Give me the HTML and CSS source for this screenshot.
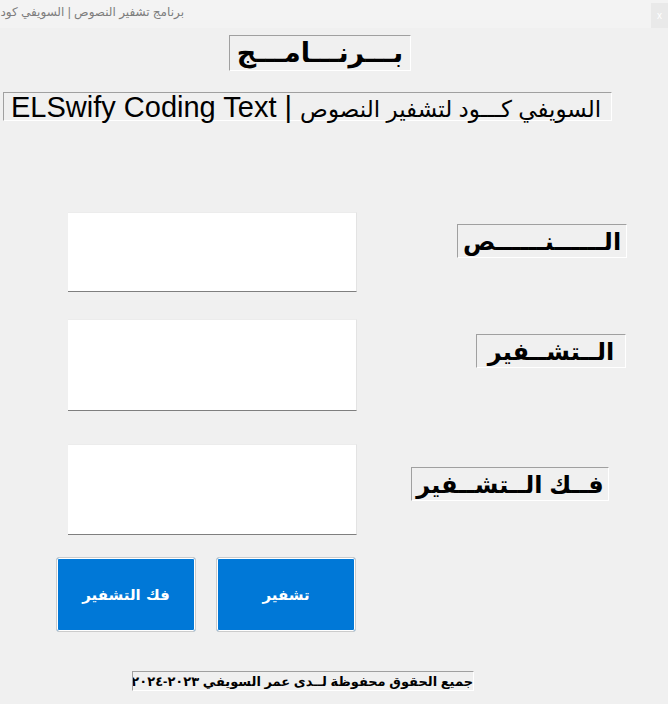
FILE: index.html
```html
<!DOCTYPE html>
<html lang="ar">
<head>
<meta charset="utf-8">
<title>برنامج تشفير النصوص</title>
<link rel="stylesheet" href="styles.css">
</head>
<body>
<div class="titlebar">
  <div class="wintitle" dir="rtl">برنامج تشفير النصوص | السويفي كود</div>
  <div class="close">x</div>
</div>
<main class="form">
  <div class="row head-row">
    <div class="label3d title" dir="rtl">بـــرنـــامـــج</div>
  </div>
  <div class="row sub-row">
    <div class="label3d subtitle" dir="rtl"><span class="ar">السويفي كـــود لتشفير النصوص</span> | <span class="en">ELSwify Coding Text</span></div>
  </div>
  <div class="row field-row r1">
    <div class="textbox tb1"></div>
    <div class="label3d field l1" dir="rtl">الــــــنــــــص</div>
  </div>
  <div class="row field-row r2">
    <div class="textbox tb2"></div>
    <div class="label3d field l2" dir="rtl">الــتشــفير</div>
  </div>
  <div class="row field-row r3">
    <div class="textbox tb3"></div>
    <div class="label3d field l3" dir="rtl">فــك الــتشــفير</div>
  </div>
  <div class="row btn-row">
    <button class="btn" dir="rtl">فك التشفير</button>
    <button class="btn" dir="rtl">تشفير</button>
  </div>
  <div class="row foot-row">
    <div class="label3d footer" dir="rtl">جميع الحقوق محفوظة لــدى عمر السويفي ٢٠٢٣-٢٠٢٤</div>
  </div>
</main>
</body>
</html>
```
FILE: styles.css
```css
* { box-sizing: border-box; }
html, body { margin: 0; padding: 0; }
body {
  width: 668px;
  height: 704px;
  overflow: hidden;
  background: #f0f0f0;
  font-family: "Liberation Sans", "DejaVu Sans", sans-serif;
  color: #000;
}
.titlebar {
  display: flex;
  align-items: flex-start;
  height: 28px;
  background: #f3f3f3;
}
.wintitle {
  width: 184px;
  overflow: hidden;
  white-space: nowrap;
  font-size: 12px;
  line-height: 24px;
  color: #7d7d7d;
}
.close {
  margin-left: auto;
  margin-top: 3px;
  width: 17px;
  height: 25px;
  background: #e9e9e9;
  color: #ffffff;
  font-size: 10px;
  line-height: 25px;
  text-align: center;
}
.row { display: flex; align-items: flex-start; }
.label3d {
  border-top: 1px solid #a0a0a0;
  border-left: 1px solid #a0a0a0;
  border-right: 1px solid #ffffff;
  border-bottom: 1px solid #ffffff;
  white-space: nowrap;
  overflow: hidden;
}
.head-row { margin-top: 7px; }
.title {
  margin-left: 229px;
  width: 182px;
  height: 36px;
  font-size: 27px;
  font-weight: bold;
  line-height: 34px;
  text-align: center;
}
.sub-row { margin-top: 21px; }
.subtitle {
  margin-left: 3px;
  width: 609px;
  height: 29px;
  font-size: 29px;
  line-height: 29px;
  padding-left: 7px;
  text-align: left;
  overflow: visible;
}
.subtitle .ar { font-size: 23px; }
.textbox {
  margin-left: 68px;
  width: 289px;
  background: #ffffff;
  border-top: 1px solid #ececec;
  border-right: 1px solid #e3e3e3;
  border-bottom: 1px solid #7f7f7f;
}
.tb1 { height: 80px; }
.tb2 { height: 92px; }
.tb3 { height: 91px; }
.r1 { margin-top: 91px; }
.r2 { margin-top: 27px; }
.r3 { margin-top: 33px; }
.field {
  margin-left: auto;
  height: 34px;
  font-size: 24px;
  font-weight: bold;
  line-height: 34px;
  text-align: center;
}
.l1 { margin-top: 12px; margin-right: 41px; width: 170px; }
.l2 { margin-top: 15px; margin-right: 42px; width: 150px; }
.l3 { margin-top: 23px; margin-right: 59px; width: 198px; }
.btn-row { margin-top: 22px; padding-left: 56px; gap: 20px; }
.btn {
  width: 140px;
  height: 75px;
  border: 1px solid #cbcbcb;
  border-radius: 3px;
  background: #0078d7;
  box-shadow: inset 0 0 0 1px #ffffff;
  color: #ffffff;
  font-family: "DejaVu Sans", sans-serif;
  font-size: 15px;
  font-weight: bold;
  padding: 0;
}
.foot-row { margin-top: 39px; }
.footer {
  margin-left: 132px;
  width: 342px;
  height: 20px;
  font-size: 13px;
  font-weight: bold;
  line-height: 19px;
  text-align: center;
}
```
